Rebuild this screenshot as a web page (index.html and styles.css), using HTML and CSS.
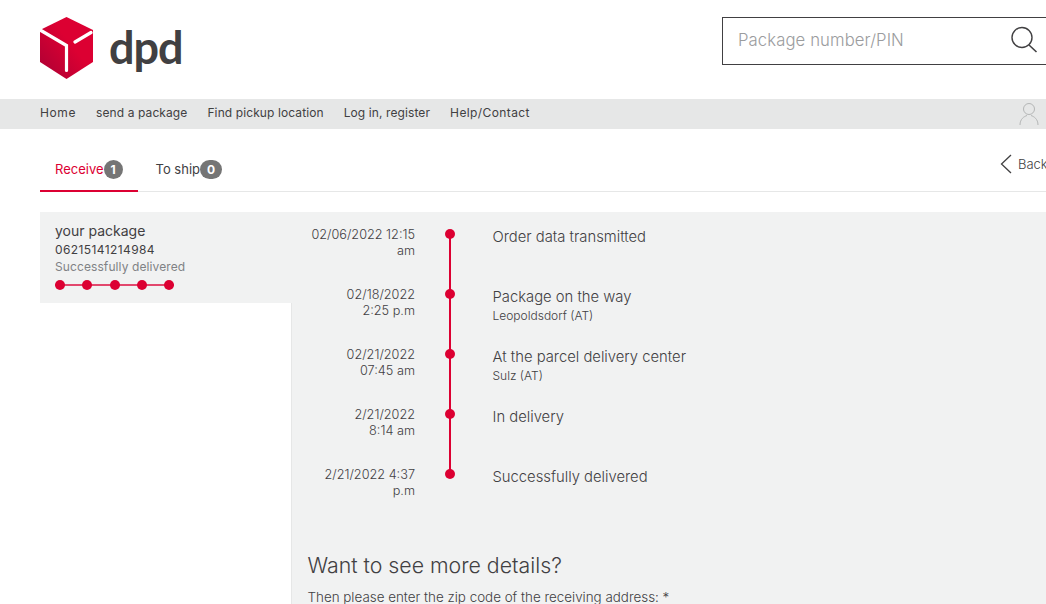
FILE: index.html
```html
<!DOCTYPE html>
<html lang="en">
<head>
<meta charset="utf-8">
<title>DPD tracking</title>
<link rel="stylesheet" href="styles.css">
</head>
<body>
<header class="header">
  <a class="logo">
    <svg class="logo-cube" width="54" height="64" viewBox="0 0 54 64">
      <defs>
        <linearGradient id="cube" x1="0" y1="1" x2="0.6" y2="0.45">
          <stop offset="0" stop-color="#a90034"/>
          <stop offset="1" stop-color="#dc0032"/>
        </linearGradient>
      </defs>
      <path d="M26.500 1 L53 14 V46 L26.500 63 L0 46 V14 Z" fill="url(#cube)"/>
      <path d="M1 14.500 L26.500 29.500 V54.500 M35 26 L51 16.500" fill="none" stroke="#fff" stroke-width="3.200" stroke-linecap="round"/>
    </svg>
    <span class="logo-text">dpd</span>
  </a>
  <div class="search">
    <span class="search-text">Package number/PIN</span>
    <svg class="search-icon" width="28" height="28" viewBox="0 0 28 28">
      <circle cx="12" cy="11.500" r="10" fill="none" stroke="#414042" stroke-width="1.400"/>
      <path d="M19 19 L26.500 26" stroke="#414042" stroke-width="1.600" fill="none"/>
    </svg>
  </div>
</header>
<nav class="nav">
  <a class="nav-home">Home</a>
  <a>send a package</a>
  <a>Find pickup location</a>
  <a>Log in, register</a>
  <a class="nav-help">Help/Contact</a>
  <svg class="user" width="20" height="24" viewBox="0 0 20 24">
    <circle cx="10" cy="7" r="5.500" fill="none" stroke="#b4b6b6" stroke-width="1"/>
    <path d="M1 23 C1 17 5 14.500 8 13.500 M19 23 C19 17 15 14.500 12 13.500" fill="none" stroke="#b4b6b6" stroke-width="1"/>
  </svg>
</nav>
<div class="tabs">
  <a class="tab tab-active">Receive<span class="badge">1</span></a>
  <a class="tab">To ship<span class="badge badge-wide">0</span></a>
  <a class="back">
    <svg width="12" height="20" viewBox="0 0 12 20"><path d="M11 1 L1.500 10 L11 19" fill="none" stroke="#414042" stroke-width="1.300"/></svg>
    <span>Back</span>
  </a>
</div>
<main class="content">
  <aside class="side">
    <div class="pkg">
      <div class="pkg-title">your package</div>
      <div class="pkg-num">06215141214984</div>
      <div class="pkg-status">Successfully delivered</div>
      <div class="steps"><i></i><i></i><i></i><i></i><i></i></div>
    </div>
  </aside>
  <section class="panel">
    <ol class="timeline">
      <li class="event">
        <div class="date">02/06/2022 12:15<br>am</div>
        <div class="mark"></div>
        <div class="info"><div class="info-title">Order data transmitted</div></div>
      </li>
      <li class="event">
        <div class="date">02/18/2022<br>2:25 p.m</div>
        <div class="mark"></div>
        <div class="info"><div class="info-title">Package on the way</div><div class="info-place">Leopoldsdorf (AT)</div></div>
      </li>
      <li class="event">
        <div class="date">02/21/2022<br>07:45 am</div>
        <div class="mark"></div>
        <div class="info"><div class="info-title">At the parcel delivery center</div><div class="info-place">Sulz (AT)</div></div>
      </li>
      <li class="event">
        <div class="date">2/21/2022<br>8:14 am</div>
        <div class="mark"></div>
        <div class="info"><div class="info-title">In delivery</div></div>
      </li>
      <li class="event">
        <div class="date">2/21/2022 4:37<br>p.m</div>
        <div class="mark"></div>
        <div class="info"><div class="info-title">Successfully delivered</div></div>
      </li>
    </ol>
    <h2 class="more">Want to see more details?</h2>
    <p class="zip">Then please enter the zip code of the receiving address: *</p>
  </section>
</main>
</body>
</html>
```
FILE: styles.css
```css
* { box-sizing: border-box; }
html, body { margin: 0; height: 604px; overflow: hidden; }
body {
  width: 1046px;
  background: #fff;
  color: #414042;
  font-family: Inter, "Liberation Sans", sans-serif;
  font-weight: 300;
}
.header {
  height: 99px;
  display: flex;
  justify-content: space-between;
  padding: 16px 0 0 40px;
}
.logo { display: flex; align-items: flex-start; gap: 15px; }
.logo-text {
  font-family: Lato, sans-serif;
  font-weight: 700;
  font-size: 45px;
  line-height: 56px;
  margin-top: 3px;
  color: #414042;
  letter-spacing: -1px;
}
.search {
  width: 330px;
  height: 48px;
  margin-top: 1px;
  margin-right: -6px;
  border: 1px solid #414042;
  display: flex;
  align-items: center;
  justify-content: space-between;
  padding: 0 13px 0 15px;
}
.search-text { font-size: 16.700px; color: #9b9c9e; margin-top: -2px; letter-spacing: 0.1px; }
.search-icon { margin-top: -2px; }
.nav {
  height: 30px;
  background: #e6e7e7;
  display: flex;
  align-items: center;
  gap: 20px;
  padding: 0 7px 3px 40px;
  font-size: 12px;
  font-weight: 400;
  letter-spacing: 0.1px;
}
.nav-home { letter-spacing: 0.6px; }
.nav-help { letter-spacing: 0.4px; }
.user { margin-left: auto; margin-top: 3px; }
.tabs {
  height: 63px;
  margin: 0 0 0 40px;
  border-bottom: 1px solid #e6e7e7;
  display: flex;
  align-items: flex-end;
  position: relative;
}
.tab {
  height: 42px;
  padding: 0 15px 2px;
  margin-bottom: -1px;
  display: flex;
  align-items: center;
  font-size: 13px;
  font-weight: 400;
  border-bottom: 2px solid transparent;
}
.tab-active { color: #dc0032; border-bottom-color: #dc0032; }
.badge {
  width: 19px;
  height: 19px;
  border-radius: 10px;
  background: #757575;
  color: #fff;
  font-size: 12px;
  font-weight: 700;
  line-height: 19px;
  text-align: center;
  display: inline-block;
}
.badge-wide { width: 22px; }
.tab + .tab { padding-left: 18px; }
.back {
  position: absolute;
  left: 960px;
  top: 25px;
  display: flex;
  align-items: center;
  gap: 6px;
  font-size: 13px;
  white-space: nowrap;
}
.content {
  display: flex;
  margin: 20px 0 0 40px;
}
.side { width: 251px; flex: none; }
.pkg {
  height: 91px;
  background: #f1f2f2;
  padding: 10px 15px 0;
}
.pkg-title { font-size: 14px; line-height: 18px; font-weight: 400; }
.pkg-num { font-size: 12px; line-height: 19px; font-weight: 400; letter-spacing: 0.4px; }
.pkg-status { font-size: 12px; line-height: 16px; color: #808285; font-weight: 400; letter-spacing: 0.1px; }
.steps {
  display: flex;
  justify-content: space-between;
  width: 119px;
  margin-top: 5px;
  background: linear-gradient(#e2486d, #e2486d) center / 100% 2px no-repeat;
}
.steps i {
  width: 10px;
  height: 10px;
  border-radius: 50%;
  background: #dc0032;
}
.panel {
  flex: 1;
  min-height: 500px;
  background: #f1f2f2;
  padding-top: 16px;
  position: relative;
}
.panel::before {
  content: "";
  position: absolute;
  left: 0;
  top: 91px;
  bottom: 0;
  width: 1px;
  background: #e6e7e7;
}
.timeline { list-style: none; margin: 0; padding: 0; }
.event {
  height: 60px;
  display: flex;
  position: relative;
}
.date {
  width: 124px;
  text-align: right;
  font-size: 12.700px;
  line-height: 16px;
  font-weight: 300;
  margin-top: -1px;
}
.mark { width: 70px; position: relative; flex: none; }
.mark::before {
  content: "";
  position: absolute;
  left: 30px;
  top: 1px;
  width: 10px;
  height: 10px;
  border-radius: 50%;
  background: #dc0032;
}
.mark::after {
  content: "";
  position: absolute;
  left: 34px;
  top: 6px;
  width: 2px;
  height: 60px;
  background: #dc0032;
}
.event:last-child .mark::after { display: none; }
.info { padding-left: 7.500px; }
.info-title { font-size: 14.800px; line-height: 18px; }
.info-place { font-size: 12px; line-height: 20px; font-weight: 300; }
.more {
  margin: 24px 0 0 16.500px;
  font-size: 21.300px;
  line-height: 26px;
  font-weight: 300;
}
.zip {
  margin: 10px 0 0 16.500px;
  font-size: 13.400px;
  line-height: 18px;
}
```
